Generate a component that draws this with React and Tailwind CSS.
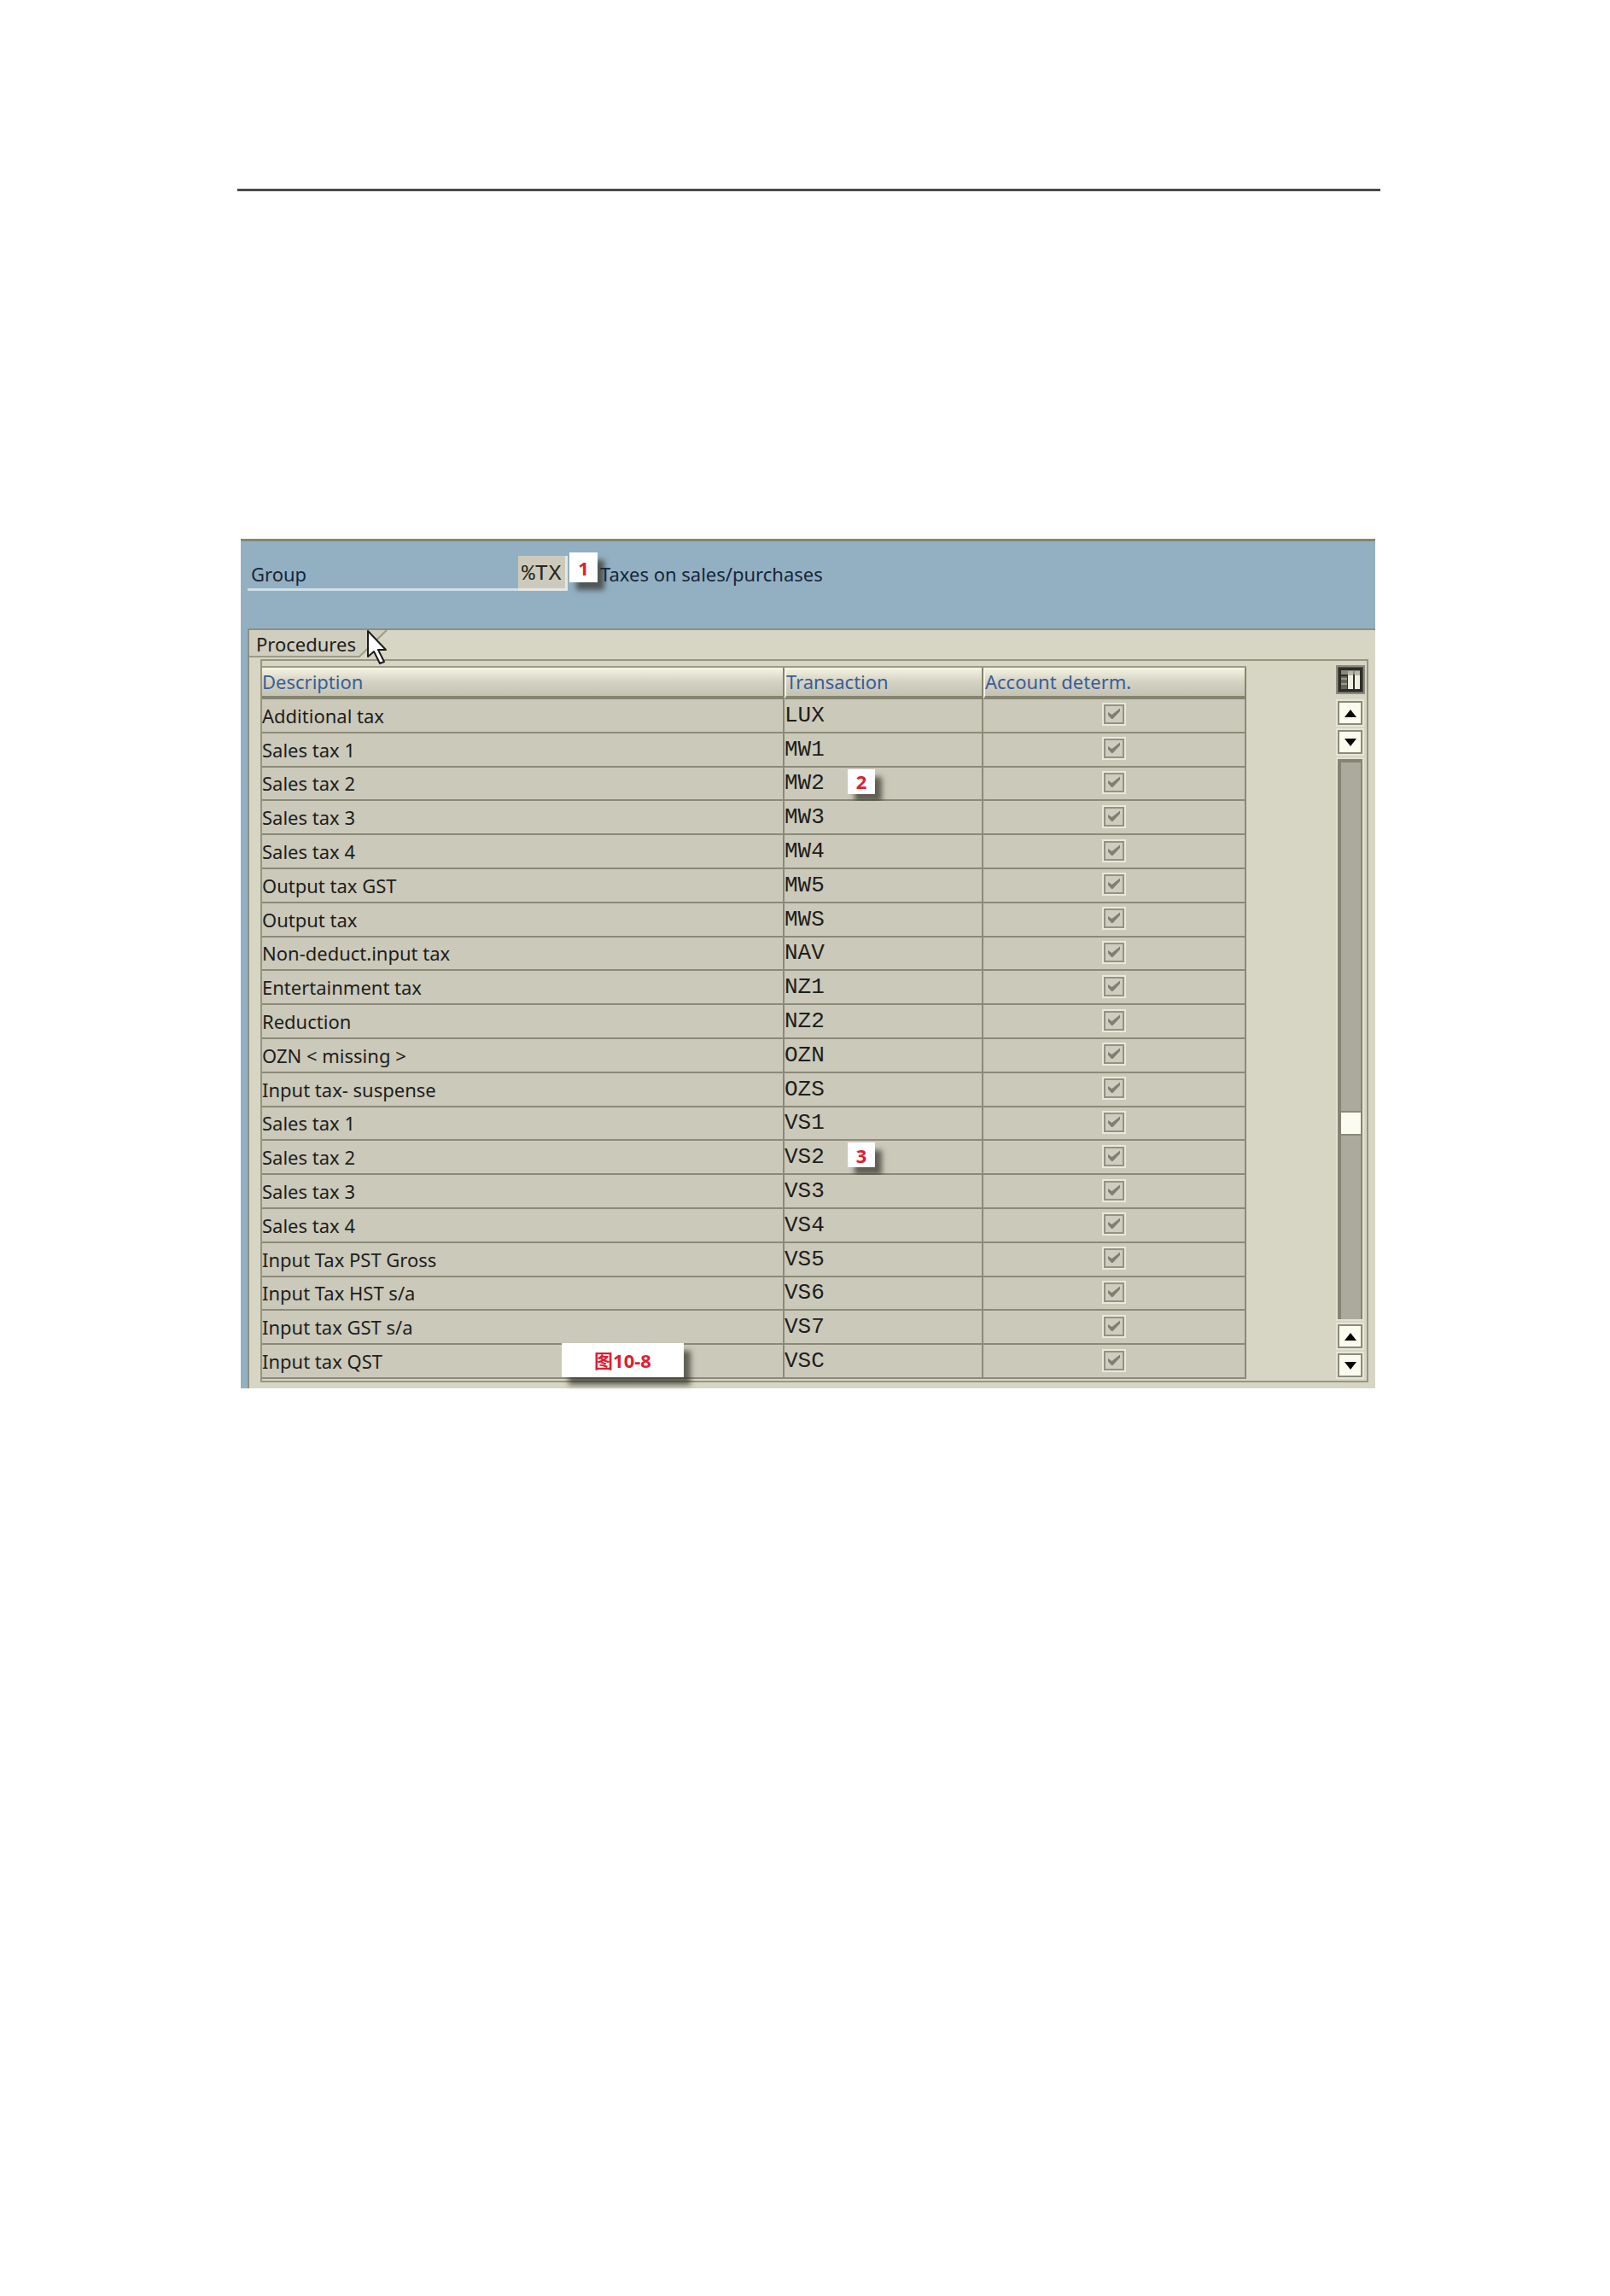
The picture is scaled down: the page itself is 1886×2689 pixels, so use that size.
const rows = [
  ["Additional tax", "LUX"],
  ["Sales tax 1", "MW1"],
  ["Sales tax 2", "MW2", "2"],
  ["Sales tax 3", "MW3"],
  ["Sales tax 4", "MW4"],
  ["Output tax GST", "MW5"],
  ["Output tax", "MWS"],
  ["Non-deduct.input tax", "NAV"],
  ["Entertainment tax", "NZ1"],
  ["Reduction", "NZ2"],
  ["OZN < missing >", "OZN"],
  ["Input tax- suspense", "OZS"],
  ["Sales tax 1", "VS1"],
  ["Sales tax 2", "VS2", "3"],
  ["Sales tax 3", "VS3"],
  ["Sales tax 4", "VS4"],
  ["Input Tax PST Gross", "VS5"],
  ["Input Tax HST s/a", "VS6"],
  ["Input tax GST s/a", "VS7"],
  ["Input tax QST", "VSC"],
];

function Marker({ children, className }) {
  return (
    <span
      className={`absolute flex items-center justify-center bg-white font-['Noto_Sans','Noto_Sans_CJK_SC',sans-serif] text-[22px] leading-none font-bold text-[#dc2032] shadow-[8px_9px_6px_rgba(50,50,40,0.7)] ${className}`}
    >
      {children}
    </span>
  );
}

function ArrowButton({ down, label }) {
  return (
    <button
      type="button"
      aria-label={label}
      className="flex h-7 w-[29px] shrink-0 items-center justify-center border-2 border-[#8b8b7b] bg-[#fafaee] outline-2 outline-[#e6e6d8]"
    >
      <svg viewBox="0 0 14 9" className="h-[9px] w-[14px]" fill="#080808">
        <path d={down ? "M0 0H14L7 9Z" : "M0 9H14L7 0Z"} />
      </svg>
    </button>
  );
}

function CheckCell({ label }) {
  return (
    <label className="relative mx-auto block h-[27px] w-[28px] border-2 border-[#e9e8da]">
      <input
        type="checkbox"
        checked
        disabled
        readOnly
        aria-label={label}
        className="block h-full w-full appearance-none border-2 border-[#939283] bg-[#cfcdbf]"
      />
      <svg
        viewBox="0 0 16 14"
        className="pointer-events-none absolute top-[4px] left-[4px] h-[14px] w-[16px]"
        fill="#808072"
      >
        <path d="M1 5L5.500 8L15 0.500V4L6.500 13H5L1 8.500Z" />
      </svg>
    </label>
  );
}

const head =
  "h-[37px] border-r-2 border-b-4 border-[#85846f] border-l-[#f4f4e6] bg-linear-to-b from-[#f6f5e4] via-[#d4d2c3] to-[#c4c2b3] p-0 text-left font-normal text-[#385e98]";
const cell = "border-r-2 border-b-2 border-[#8b8a78] bg-[#cbc9ba] p-0 leading-8";

export default function App() {
  return (
    <div className="min-h-screen bg-white pt-[221px] pr-[269px] pb-24 pl-[278px] font-['Noto_Sans',sans-serif] text-[22px] text-[#1e1e1a]">
      <hr className="h-[3px] border-0 bg-[#4a4a4a]" />

      <main className="mt-[407px] mr-1.5 ml-1 flex flex-col border-t-[3px] border-[#858578] bg-[#93b0c2]">
        <header className="flex h-[102px] items-start pt-[17px] pl-2 text-[#16263a]">
          <label
            htmlFor="group"
            className="h-[41px] w-[317px] border-b-[3px] border-[#cfdfe8] pl-1 leading-[42px]"
          >
            Group
          </label>
          <input
            id="group"
            readOnly
            defaultValue="%TX"
            className="h-[41px] w-[58px] border-r-[3px] border-b-[3px] border-[#e4e7e2] bg-[#cdcabc] pt-1 pl-1 font-['Liberation_Mono',monospace] text-[26px] text-[#2a2820]"
          />
          <span className="relative h-[38px] w-[38px]">
            <Marker className="-top-1 left-0.5 z-0 h-[35px] w-[33px]">1</Marker>
          </span>
          <span className="relative leading-[42px]">Taxes on sales/purchases</span>
        </header>

        <section className="ml-2 border-t-2 border-l-2 border-[#8d8f84] bg-[#d7d6c4] pr-2 pb-[7px]">
          <div role="tablist" className="flex h-[34px] items-start">
            <button
              type="button"
              role="tab"
              aria-selected="true"
              className="relative h-[32px] w-[162px] pl-2 text-left leading-[28px]"
            >
              <svg
                viewBox="0 0 162 32"
                className="absolute top-0 left-0 h-[32px] w-[162px]"
                fill="#d0cebf"
                stroke="#9c9b8a"
                strokeWidth="2"
              >
                <path stroke="none" d="M0 0H161L129 31H0Z" />
                <path fill="none" d="M0 31H129L161 0" />
              </svg>
              <span className="relative">Procedures</span>
              <svg
                viewBox="0 0 24 42"
                className="absolute top-0 left-[138px] z-10 h-[42px] w-6"
                fill="#ffffff"
                stroke="#1c1c1c"
                strokeWidth="2"
                strokeLinejoin="round"
              >
                <path d="M1 1V31L8 25L15 39L20 37L13 23H22Z" />
              </svg>
            </button>
          </div>

          <div className="ml-[13px] flex h-[847px] border-2 border-[#96957f]">
            <div className="relative min-w-0 flex-1">
              <table className="mt-1.5 h-[835px] w-full table-fixed border-separate border-spacing-0 border-t-2 border-[#9b9a8a]">
                <thead>
                  <tr>
                    <th className={head}>Description</th>
                    <th className={`${head} w-[233px] border-l-2`}>Transaction</th>
                    <th className={`${head} w-[308px] border-l-2`}>Account determ.</th>
                  </tr>
                </thead>
                <tbody>
                  {rows.map(([name, code, mark]) => (
                    <tr key={code}>
                      <td className={cell}>{name}</td>
                      <td className={`${cell} relative font-['Liberation_Mono',monospace] text-[26px]`}>
                        {code}
                        {mark && <Marker className="top-0.5 left-[74px] h-[29px] w-[32px]">{mark}</Marker>}
                      </td>
                      <td className={`${cell} pb-0.5`}>
                        <CheckCell label={`${name} ${code} account determination`} />
                      </td>
                    </tr>
                  ))}
                </tbody>
              </table>
              <Marker className="bottom-1 left-[351px] h-[40px] w-[143px]">图10-8</Marker>
            </div>

            <aside className="ml-[102px] flex w-[39px] flex-col items-center pt-[5px] pb-1">
              <button
                type="button"
                aria-label="Table settings"
                className="mb-2 h-[34px] w-[34px] shrink-0 border-2 border-[#8d8c7e] bg-[#55544c]"
              >
                <svg viewBox="0 0 30 30" className="h-[30px] w-[30px]">
                  <path fill="#2e2e28" d="M1 1H29V29H1Z" />
                  <path fill="#8a897d" d="M4 4H26V9H4Z" />
                  <path fill="#66655b" d="M4 11H11V26H4Z" />
                  <path fill="#9a998c" d="M4 13H11V15H4ZM4 19H11V21H4Z" />
                  <path fill="#efeee2" d="M12 10H18V26H12ZM20 10H26V26H20Z" />
                  <path fill="#b9b8ac" d="M12 5H18V10H12ZM20 5H26V10H20Z" />
                </svg>
              </button>
              <ArrowButton label="Scroll to top" />
              <div className="h-1.5 shrink-0" />
              <ArrowButton down label="Scroll down" />
              <div className="my-1.5 flex w-[29px] flex-1 flex-col border-t-4 border-r-2 border-l-4 border-[#858474] bg-[#acaa9d] outline-2 outline-[#e2e2d3]">
                <div className="grow-[407]" />
                <div className="h-[29px] border-y-2 border-[#8b8a7a] bg-[#fcfbef]" />
                <div className="grow-[215]" />
              </div>
              <ArrowButton label="Scroll up" />
              <div className="h-1.5 shrink-0" />
              <ArrowButton down label="Scroll to bottom" />
            </aside>
          </div>
        </section>
      </main>
    </div>
  );
}
